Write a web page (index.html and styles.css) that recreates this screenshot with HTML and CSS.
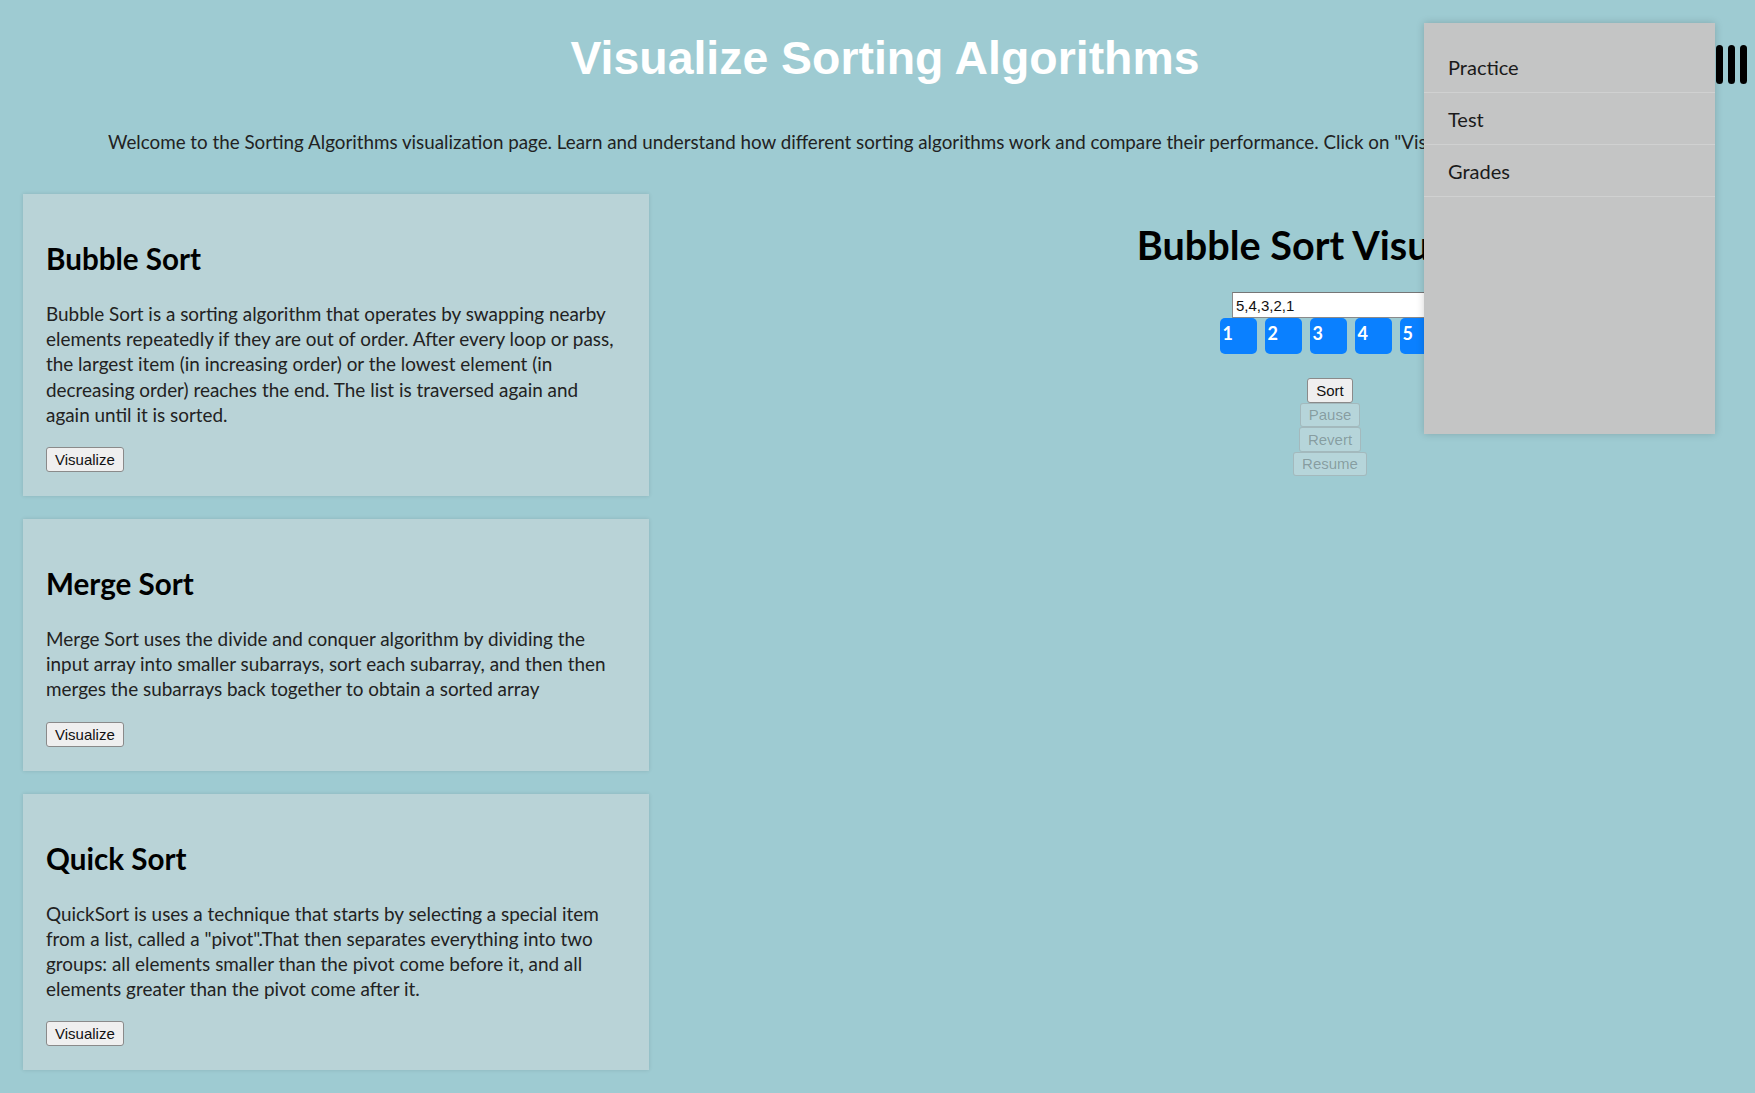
FILE: index.html
```html
<!DOCTYPE html>
<html lang="en">
<head>
<meta charset="utf-8">
<title>Visualize Sorting Algorithms</title>
<link rel="stylesheet" href="styles.css">
</head>
<body>
<header class="top">
  <h1 class="title">Visualize Sorting Algorithms</h1>
</header>
<p class="intro">Welcome to the Sorting Algorithms visualization page. Learn and understand how different sorting algorithms work and compare their performance. Click on "Visualize" to see each one.</p>
<main class="layout">
  <section class="cards">
    <article class="card">
      <h2 class="card-title">Bubble Sort</h2>
      <p class="card-text">Bubble Sort is a sorting algorithm that operates by swapping nearby elements repeatedly if they are out of order. After every loop or pass, the largest item (in increasing order) or the lowest element (in decreasing order) reaches the end. The list is traversed again and again until it is sorted.</p>
      <button class="btn">Visualize</button>
    </article>
    <article class="card">
      <h2 class="card-title">Merge Sort</h2>
      <p class="card-text">Merge Sort uses the divide and conquer algorithm by dividing the input array into smaller subarrays, sort each subarray, and then then merges the subarrays back together to obtain a sorted array</p>
      <button class="btn">Visualize</button>
    </article>
    <article class="card">
      <h2 class="card-title">Quick Sort</h2>
      <p class="card-text">QuickSort is uses a technique that starts by selecting a special item from a list, called a "pivot".That then separates everything into two groups: all elements smaller than the pivot come before it, and all elements greater than the pivot come after it.</p>
      <button class="btn">Visualize</button>
    </article>
  </section>
  <section class="viz">
    <h1 class="viz-title">Bubble Sort Visualizer</h1>
    <input class="viz-input" type="text" value="5,4,3,2,1">
    <div class="bars">
      <div class="bar">1</div>
      <div class="bar">2</div>
      <div class="bar">3</div>
      <div class="bar">4</div>
      <div class="bar">5</div>
    </div>
    <div class="controls">
      <button class="btn ctl">Sort</button>
      <button class="btn ctl" disabled>Pause</button>
      <button class="btn ctl" disabled>Revert</button>
      <button class="btn ctl" disabled>Resume</button>
    </div>
  </section>
</main>
<nav class="menu">
  <a class="menu-item" href="#">Practice</a>
  <a class="menu-item" href="#">Test</a>
  <a class="menu-item" href="#">Grades</a>
</nav>
<div class="burger" aria-label="menu">
  <span class="burger-bar"></span>
  <span class="burger-bar"></span>
  <span class="burger-bar"></span>
</div>
</body>
</html>
```
FILE: styles.css
```css
html, body {
  margin: 0;
  padding: 0;
}
body {
  background: #9ecbd2;
  font-family: Lato, "Open Sans", sans-serif;
  color: #222;
  width: 1755px;
  height: 1093px;
  overflow: hidden;
  position: relative;
}
.top {
  padding: 32px 0 0 15px;
  text-align: center;
}
.title {
  margin: 0;
  font-family: "Liberation Sans", Arial, sans-serif;
  font-weight: bold;
  font-size: 46.4px;
  line-height: 53px;
  color: #fff;
}
.intro {
  margin: 44px 0 0 108px;
  width: 1316px;
  overflow: hidden;
  font-size: 18.8px;
  line-height: 25px;
  white-space: nowrap;
  color: #222;
}
.layout {
  margin-top: 40px;
  display: grid;
  grid-template-columns: 882px 1fr;
  padding-left: 23px;
}
.cards {
  width: 626px;
}
.card {
  background: #b9d3d7;
  padding: 23px 23px 24px;
  margin-bottom: 23px;
  box-shadow: 0 0 4px rgba(0, 0, 0, 0.12);
}
.card-title {
  margin: 24px 0 24px;
  font-size: 29.6px;
  line-height: 36px;
  font-weight: bold;
  color: #000;
}
.card-text {
  margin: 0 0 20px;
  font-size: 18.9px;
  line-height: 25.2px;
  color: #222;
}
.btn {
  font-family: "Liberation Sans", Arial, sans-serif;
  font-size: 15px;
  line-height: 17px;
  padding: 3px 8px;
  background: #efefef;
  color: #111;
  border: 1px solid #8a8a8a;
  border-radius: 3px;
}
.btn:disabled {
  background: rgba(239, 239, 239, 0.3);
  color: rgba(16, 16, 16, 0.3);
  border-color: rgba(118, 118, 118, 0.3);
}
.viz {
  text-align: center;
}
.viz-title {
  margin: 27px 0 23px;
  font-size: 39.6px;
  line-height: 48px;
  font-weight: bold;
  color: #000;
}
.viz-input {
  display: block;
  margin: 0 auto;
  box-sizing: border-box;
  width: 196px;
  height: 26px;
  padding: 1px 3px;
  font-family: "Liberation Sans", Arial, sans-serif;
  font-size: 15px;
  color: #111;
  background: #fff;
  border: 1px solid #8a8a8a;
  border-top-color: #767676;
}
.bars {
  display: flex;
  justify-content: center;
  gap: 8px;
  margin-right: 4px;
}
.bar {
  width: 37px;
  height: 36px;
  box-sizing: border-box;
  padding: 4px 3px 0;
  background: #0a80ff;
  border-radius: 5px;
  color: #fff;
  font-weight: bold;
  font-size: 18px;
  line-height: 22px;
  text-align: left;
}
.controls {
  margin-top: 24px;
  display: flex;
  flex-direction: column;
  align-items: center;
}
.ctl {
  height: 24.5px;
  padding: 2px 8px;
}
.menu {
  position: absolute;
  top: 23px;
  left: 1424px;
  width: 291px;
  height: 411px;
  box-sizing: border-box;
  padding-top: 18px;
  background: #c4c5c5;
  box-shadow: 0 0 8px rgba(0, 0, 0, 0.18);
  display: flex;
  flex-direction: column;
}
.menu-item {
  display: block;
  padding-left: 24px;
  padding-top: 1px;
  line-height: 50px;
  border-bottom: 1px solid #d0d1d1;
  font-size: 20px;
  color: #1a1a1a;
  text-decoration: none;
}
.burger {
  position: absolute;
  top: 45px;
  left: 1716px;
  display: flex;
  gap: 5px;
}
.burger-bar {
  display: block;
  width: 7px;
  height: 39px;
  background: #000;
  border-radius: 3.5px;
}
```
